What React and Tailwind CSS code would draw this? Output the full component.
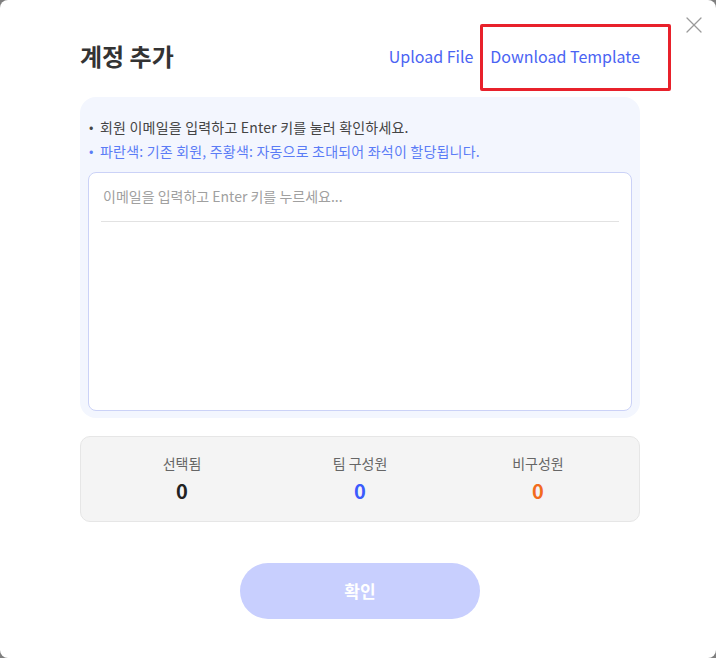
import { X } from "lucide-react";

const stats = [
  { label: "선택됨", value: 0, color: "text-[#222222]" },
  { label: "팀 구성원", value: 0, color: "text-[#3b5bfd]" },
  { label: "비구성원", value: 0, color: "text-[#f26b1d]" },
];

export default function App() {
  return (
    <div
      className="w-[716px] h-[658px] bg-[#7f7f7f]"
      style={{ fontFamily: '"Noto Sans CJK KR", "Noto Sans", sans-serif' }}
    >
      <div className="relative h-full rounded-lg bg-white pl-20 pt-[38px]">
        {/* close */}
        <button className="absolute right-[8px] top-[11px] text-[#9a9a9a]">
          <X size={28} strokeWidth={1.1} />
        </button>

        {/* annotation box */}
        <div className="absolute left-[480px] top-[24px] w-[191px] h-[67px] border-[3px] border-[#e8212b] rounded-[2px]" />

        <div className="w-[560px]">
          {/* HEADER */}
          <div className="flex items-center justify-between h-[36px]">
            <h2 className="text-[24px] font-bold text-[#333333] leading-none">계정 추가</h2>
            <div className="flex items-center gap-[17px] text-[16px] text-[#4a63f3]">
              <span>Upload File</span>
              <span>Download Template</span>
            </div>
          </div>

          {/* INPUT PANEL */}
          <div className="mt-[23px] rounded-2xl bg-[#f3f6fe] px-2 pt-[18px] pb-[7px]">
            <div className="text-[14px] leading-[24px] tracking-[0.2px]">
              <p className="flex items-center text-[#444444]">
                <span className="w-[12px] pl-[1px] text-[13px]">•</span>
                <span>회원 이메일을 입력하고 Enter 키를 눌러 확인하세요.</span>
              </p>
              <p className="flex items-center text-[#5b7cf6]">
                <span className="w-[12px] pl-[1px] text-[13px]">•</span>
                <span>파란색: 기존 회원, 주황색: 자동으로 초대되어 좌석이 할당됩니다.</span>
              </p>
            </div>
            <div className="mt-[9px] h-[239px] rounded-lg border border-[#cbd2f7] bg-white px-3 pt-[10px]">
              <input
                className="w-full h-[36px] pb-[14px] px-[2px] border-b border-[#e2e2e2] text-[14px] outline-none placeholder:text-[#a0a0a0]"
                placeholder="이메일을 입력하고 Enter 키를 누르세요..."
              />
            </div>
          </div>

          {/* STATS */}
          <div className="mt-[18px] grid grid-cols-3 rounded-[10px] border border-[#e6e6e6] bg-[#f4f4f4] px-3 pt-[16px] pb-[16px]">
            {stats.map((s) => (
              <div key={s.label} className="flex flex-col items-center">
                <span className="text-[14px] leading-[20px] text-[#666666]">{s.label}</span>
                <span className={`mt-[4px] text-[20px] leading-[28px] font-bold ${s.color}`}>{s.value}</span>
              </div>
            ))}
          </div>

          {/* CONFIRM */}
          <div className="mt-[41px] flex justify-center">
            <button className="w-[240px] h-[56px] rounded-full bg-[#c8cffe] text-[17px] font-bold text-white">
              확인
            </button>
          </div>
        </div>
      </div>
    </div>
  );
}
